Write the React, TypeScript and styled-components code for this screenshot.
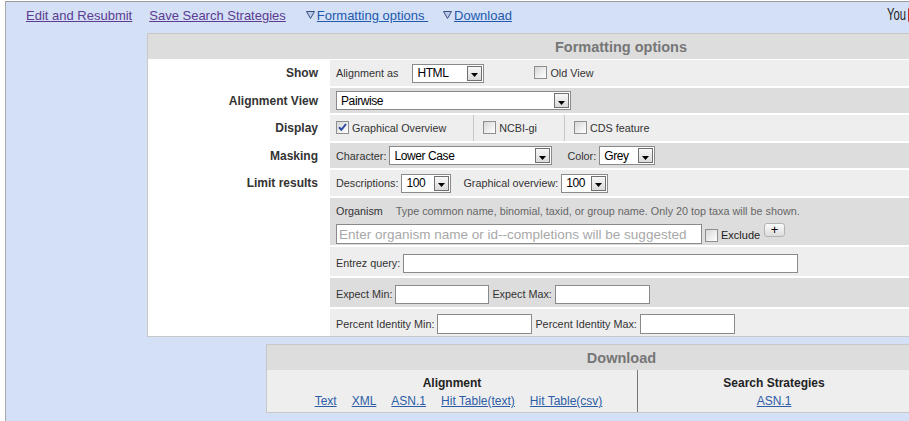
import React from "react";
import styled, { createGlobalStyle } from "styled-components";

const Global = createGlobalStyle`
  html, body { margin: 0; padding: 0; background: #fff; overflow: hidden; }
  body { font-family: "Liberation Sans", Arial, sans-serif; }
  #root { width: 909px; height: 421px; overflow: hidden; }
`;

const Frame = styled.div`
  margin: 1px 0 0 5px;
  height: 420px;
  border-top: 1px solid #9a9a9a;
  border-left: 1px solid #a8a8a8;
  background: #d4e0f6;
`;

const NavBar = styled.nav`
  display: flex;
  align-items: flex-start;
  height: 31px;
  box-sizing: border-box;
  padding: 6px 0 0 20px;
  font-size: 13px;
  line-height: 16px;
`;

const NavItem = styled.span<{ $ml?: number }>`
  display: inline-flex;
  align-items: flex-start;
  margin-left: ${(p) => p.$ml ?? 0}px;
  white-space: pre;
`;

const NavLink = styled.a<{ $visited?: boolean }>`
  color: ${(p) => (p.$visited ? "#5b3c90" : "#2259ad")};
  text-decoration: underline;
  cursor: pointer;
`;

const Tri = styled.svg`
  width: 9px;
  height: 8px;
  margin: 3px 2px 0 0;
  flex-shrink: 0;
`;

const Logo = styled.span`
  margin-left: auto;
  width: 22px;
  flex-shrink: 0;
  display: flex;
  align-items: center;
  margin-top: -1px;
`;

const LogoYou = styled.span`
  display: inline-block;
  width: 21px;
  font-size: 16px;
  color: #1e1e1e;
  transform: scaleX(0.7);
  transform-origin: left center;
  white-space: nowrap;
`;

const LogoTube = styled.span`
  display: inline-block;
  width: 30px;
  height: 16px;
  border-radius: 3px;
  background: #c9302c;
  flex-shrink: 0;
`;

const Panel = styled.section<{ $ml: number; $w: number; $mt?: number }>`
  margin: ${(p) => p.$mt ?? 0}px 0 0 ${(p) => p.$ml}px;
  width: ${(p) => p.$w}px;
  border: 1px solid #c8c8c8;
  background: #fff;
  box-sizing: border-box;
`;

const PanelHeader = styled.div`
  height: 25px;
  background: #dddddd;
  display: flex;
  align-items: center;
  justify-content: center;
  font-weight: bold;
  font-size: 14.5px;
  color: #767676;
`;

const Rows = styled.div`
  display: flex;
  flex-direction: column;
  gap: 2px;
  padding-top: 1px;
`;

const FormRow = styled.div<{ $h: number }>`
  display: grid;
  grid-template-columns: 182px 1fr;
  height: ${(p) => p.$h}px;
`;

const Label = styled.div`
  display: flex;
  align-items: center;
  justify-content: flex-end;
  padding-right: 12px;
  font-weight: bold;
  font-size: 12px;
  color: #333;
`;

const Cell = styled.div<{ $tone: "light" | "dark"; $top?: number }>`
  background: ${(p) => (p.$tone === "light" ? "#eeeeee" : "#dddddd")};
  display: flex;
  align-items: center;
  gap: 3px;
  box-sizing: border-box;
  padding: ${(p) => p.$top ?? 0}px 0 0 6px;
  font-size: 10.8px;
  color: #333;
  white-space: nowrap;
`;

const StackCell = styled(Cell)`
  flex-direction: column;
  align-items: flex-start;
  gap: 5px;
`;

const Line = styled.div`
  display: flex;
  align-items: flex-end;
  line-height: 14px;
`;

const Spaced = styled.span<{ $ml?: number }>`
  display: inline-flex;
  align-items: center;
  margin-left: ${(p) => p.$ml ?? 0}px;
`;

const Hint = styled.span`
  margin-left: 13px;
  color: #666;
`;

const DisplayOpt = styled.div`
  display: flex;
  align-items: center;
  align-self: stretch;
  padding-right: 24px;
  & + & {
    border-left: 1px solid #c6c6c6;
    padding-left: 9px;
  }
`;

const CheckLabel = styled.label<{ $ml?: number }>`
  display: inline-flex;
  align-items: center;
  gap: 3px;
  margin-left: ${(p) => p.$ml ?? 0}px;
`;

const Box = styled.span`
  width: 13px;
  height: 13px;
  box-sizing: border-box;
  border: 1px solid #8e8f8f;
  background: linear-gradient(135deg, #d6d6d6 0%, #f2f2f2 65%, #ffffff 100%);
  display: inline-flex;
  align-items: center;
  justify-content: center;
  flex-shrink: 0;
  margin-bottom: 2px;
`;

const SelectBox = styled.span<{ $w: number; $ml?: number }>`
  display: inline-flex;
  align-items: center;
  width: ${(p) => p.$w}px;
  height: 19px;
  margin-left: ${(p) => p.$ml ?? 0}px;
  box-sizing: border-box;
  border: 1px solid #8a8a8a;
  background: #fff;
  padding: 0 1px 0 4px;
  font-size: 12px;
  letter-spacing: -0.4px;
  color: #000;
`;

const SelectValue = styled.span`
  flex: 1;
`;

const DropBtn = styled.span`
  width: 15px;
  height: 15px;
  box-sizing: border-box;
  border: 1px solid #707070;
  background: linear-gradient(#f8f8f8, #dadada);
  display: flex;
  align-items: center;
  justify-content: center;
  padding-top: 4px;
`;

const TextInput = styled.input<{ $w: number; $h?: number; $big?: boolean }>`
  width: ${(p) => p.$w}px;
  height: ${(p) => p.$h ?? 20}px;
  box-sizing: border-box;
  border: 1px solid #8a8a8a;
  background: #fff;
  margin: 0;
  padding: 0 2px;
  font-family: "Liberation Sans", Arial, sans-serif;
  font-size: ${(p) => (p.$big ? 13.5 : 12)}px;
  outline: none;
  &::placeholder {
    color: #a8a8a8;
  }
`;

const PlusBtn = styled.span`
  width: 21px;
  height: 14px;
  box-sizing: border-box;
  border: 1px solid #b4b4b4;
  border-radius: 3px;
  background: linear-gradient(#fbfbfb, #dcdcdc);
  display: inline-flex;
  align-items: center;
  justify-content: center;
  font-size: 13px;
  line-height: 12px;
  color: #000;
  margin: 0 0 7px 4px;
`;

const ExcludeText = styled.span`
  color: #222;
  font-size: 11px;
  margin-bottom: 2px;
`;

const DLBody = styled.div`
  display: grid;
  grid-template-columns: 370px 273px;
  height: 42px;
  background: #eeeeee;
`;

const DLCol = styled.div`
  display: flex;
  flex-direction: column;
  align-items: center;
  gap: 4px;
  padding-top: 6px;
  line-height: 14px;
  font-size: 12px;
  & + & {
    border-left: 1px solid #777;
  }
`;

const DLTitle = styled.div`
  font-weight: bold;
  color: #222;
`;

const DLLinks = styled.div<{ $shift?: number }>`
  display: flex;
  gap: 15px;
  padding-left: ${(p) => p.$shift ?? 0}px;
`;

const DLLink = styled.a`
  color: #2c5da6;
  text-decoration: underline;
  cursor: pointer;
`;

function Triangle() {
  return (
    <Tri viewBox="0 0 9 8">
      <polygon points="0.5,0.5 8.5,0.5 4.5,7.5" fill="#b9c9e6" stroke="#3a4f86" strokeWidth="1" />
    </Tri>
  );
}

function Check({ checked }: { checked?: boolean }) {
  return (
    <Box>
      {checked && (
        <svg width="11" height="11" viewBox="0 0 11 11">
          <path d="M2 5.2 L4.4 7.8 L9 2" fill="none" stroke="#2a4aa0" strokeWidth="2" />
        </svg>
      )}
    </Box>
  );
}

function Select({ value, w, ml }: { value: string; w: number; ml?: number }) {
  return (
    <SelectBox $w={w} $ml={ml}>
      <SelectValue>{value}</SelectValue>
      <DropBtn>
        <svg width="7" height="4" viewBox="0 0 7 4">
          <polygon points="0,0 7,0 3.5,4" fill="#000" />
        </svg>
      </DropBtn>
    </SelectBox>
  );
}

export default function App() {
  return (
    <>
      <Global />
      <Frame>
        <NavBar>
          <NavItem>
            <NavLink $visited>Edit and Resubmit</NavLink>
          </NavItem>
          <NavItem $ml={17}>
            <NavLink $visited>Save Search Strategies</NavLink>
          </NavItem>
          <NavItem $ml={20}>
            <Triangle />
            <NavLink>Formatting options </NavLink>
          </NavItem>
          <NavItem $ml={15}>
            <Triangle />
            <NavLink>Download</NavLink>
          </NavItem>
          <Logo>
            <LogoYou>You</LogoYou>
            <LogoTube />
          </Logo>
        </NavBar>

        <Panel $ml={141} $w={948}>
          <PanelHeader>Formatting options</PanelHeader>
          <Rows>
            <FormRow $h={26}>
              <Label>Show</Label>
              <Cell $tone="light">
                <span>Alignment as</span>
                <Select value="HTML" w={72} ml={11} />
                <CheckLabel $ml={47}>
                  <Check />
                  Old View
                </CheckLabel>
              </Cell>
            </FormRow>
            <FormRow $h={25}>
              <Label>Alignment View</Label>
              <Cell $tone="dark">
                <Select value="Pairwise" w={235} />
              </Cell>
            </FormRow>
            <FormRow $h={26}>
              <Label>Display</Label>
              <Cell $tone="light">
                <DisplayOpt>
                  <CheckLabel>
                    <Check checked />
                    Graphical Overview
                  </CheckLabel>
                </DisplayOpt>
                <DisplayOpt>
                  <CheckLabel>
                    <Check />
                    NCBI-gi
                  </CheckLabel>
                </DisplayOpt>
                <DisplayOpt>
                  <CheckLabel>
                    <Check />
                    CDS feature
                  </CheckLabel>
                </DisplayOpt>
              </Cell>
            </FormRow>
            <FormRow $h={25}>
              <Label>Masking</Label>
              <Cell $tone="dark">
                <span>Character:</span>
                <Select value="Lower Case" w={163} />
                <Spaced $ml={12}>Color:</Spaced>
                <Select value="Grey" w={56} />
              </Cell>
            </FormRow>
            <FormRow $h={26}>
              <Label>Limit results</Label>
              <Cell $tone="light">
                <span>Descriptions:</span>
                <Select value="100" w={50} />
                <Spaced $ml={9}>Graphical overview:</Spaced>
                <Select value="100" w={47} />
              </Cell>
            </FormRow>
            <FormRow $h={47}>
              <Label />
              <StackCell $tone="dark" $top={6}>
                <Line>
                  <span>Organism</span>
                  <Hint>Type common name, binomial, taxid, or group name. Only 20 top taxa will be shown.</Hint>
                </Line>
                <Line>
                  <TextInput
                    $w={366}
                    $big
                    placeholder="Enter organism name or id--completions will be suggested"
                  />
                  <CheckLabel $ml={3}>
                    <Check />
                    <ExcludeText>Exclude</ExcludeText>
                  </CheckLabel>
                  <PlusBtn>+</PlusBtn>
                </Line>
              </StackCell>
            </FormRow>
            <FormRow $h={29}>
              <Label />
              <Cell $tone="light" $top={3}>
                <span>Entrez query:</span>
                <TextInput $w={395} $h={19} />
              </Cell>
            </FormRow>
            <FormRow $h={29}>
              <Label />
              <Cell $tone="dark" $top={3}>
                <span>Expect Min:</span>
                <TextInput $w={94} $h={19} />
                <span>Expect Max:</span>
                <TextInput $w={95} $h={19} />
              </Cell>
            </FormRow>
            <FormRow $h={27}>
              <Label />
              <Cell $tone="light" $top={3}>
                <span>Percent Identity Min:</span>
                <TextInput $w={95} />
                <span>Percent Identity Max:</span>
                <TextInput $w={95} />
              </Cell>
            </FormRow>
          </Rows>
        </Panel>

        <Panel $ml={260} $w={711} $mt={7}>
          <PanelHeader>Download</PanelHeader>
          <DLBody>
            <DLCol>
              <DLTitle>Alignment</DLTitle>
              <DLLinks $shift={13}>
                <DLLink>Text</DLLink>
                <DLLink>XML</DLLink>
                <DLLink>ASN.1</DLLink>
                <DLLink>Hit Table(text)</DLLink>
                <DLLink>Hit Table(csv)</DLLink>
              </DLLinks>
            </DLCol>
            <DLCol>
              <DLTitle>Search Strategies</DLTitle>
              <DLLinks>
                <DLLink>ASN.1</DLLink>
              </DLLinks>
            </DLCol>
          </DLBody>
        </Panel>
      </Frame>
    </>
  );
}
